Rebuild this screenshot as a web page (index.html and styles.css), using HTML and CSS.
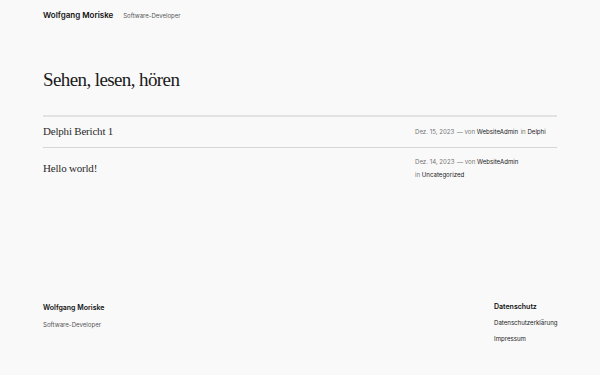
FILE: index.html
```html
<!DOCTYPE html>
<html lang="de">
<head>
<meta charset="utf-8">
<title>Wolfgang Moriske</title>
<link rel="stylesheet" href="styles.css">
</head>
<body>
<div class="page">
  <header class="site-header">
    <a class="site-title" href="#">Wolfgang Moriske</a>
    <span class="site-tagline">Software-Developer</span>
  </header>
  <main class="main">
    <h1 class="page-title">Sehen, lesen, hören</h1>
    <ul class="post-list">
      <li class="post">
        <h2 class="post-title"><a href="#">Delphi Bericht 1</a></h2>
        <div class="post-meta">
          <span class="meta-item">Dez. 15, 2023</span>
          <span class="meta-item">— von <a href="#">WebsiteAdmin</a></span>
          <span class="meta-item">in <a href="#">Delphi</a></span>
        </div>
      </li>
      <li class="post">
        <h2 class="post-title"><a href="#">Hello world!</a></h2>
        <div class="post-meta">
          <span class="meta-item">Dez. 14, 2023</span>
          <span class="meta-item">— von <a href="#">WebsiteAdmin</a></span>
          <span class="meta-item">in <a href="#">Uncategorized</a></span>
        </div>
      </li>
    </ul>
  </main>
  <footer class="site-footer">
    <div class="footer-brand">
      <a class="footer-title" href="#">Wolfgang Moriske</a>
      <span class="footer-tagline">Software-Developer</span>
    </div>
    <nav class="footer-nav">
      <span class="footer-nav-title">Datenschutz</span>
      <a href="#">Datenschutzerklärung</a>
      <a href="#">Impressum</a>
    </nav>
  </footer>
</div>
</body>
</html>
```

FILE: styles.css
```css
* { box-sizing: border-box; }
html, body { margin: 0; padding: 0; }
body {
  background: #f9f9f9;
  color: #111111;
  font-family: Inter, "Noto Sans", sans-serif;
  width: 600px;
  height: 375px;
  overflow: hidden;
}
a { color: inherit; text-decoration: none; }
.page {
  padding: 0 43px;
  display: flex;
  flex-direction: column;
  height: 375px;
}
.site-header {
  display: flex;
  align-items: baseline;
  gap: 10px;
  padding-top: 10px;
  height: 20px;
}
.site-title {
  font-size: 8px;
  font-weight: 600;
  line-height: 10px;
}
.site-tagline {
  font-size: 6px;
  color: #555;
}
.main {
  padding-top: 48px;
}
.page-title {
  font-family: "Liberation Serif", serif;
  font-weight: 400;
  font-size: 19px;
  letter-spacing: -0.6px;
  line-height: 24px;
  margin: 0 0 23px;
  color: #1a1a1a;
}
.post-list {
  list-style: none;
  margin: 0;
  padding: 0;
}
.post {
  display: grid;
  grid-template-columns: 1fr 142px;
  align-items: center;
  border-top: 1px solid #d6d6d6;
  padding: 7px 0 9px;
}
.post:first-child {
  border-top: 2px solid #e2e2e2;
  padding-top: 8px;
}
.post-title {
  font-family: "Liberation Serif", serif;
  font-weight: 400;
  font-size: 11px;
  letter-spacing: -0.2px;
  line-height: 13px;
  margin: 0;
  color: #2a2a2a;
}
.post-meta {
  display: flex;
  flex-wrap: wrap;
  column-gap: 2.5px;
  font-size: 6.1px;
  line-height: 13px;
  color: #767676;
}
.post-meta a { color: #222; }
.site-footer {
  margin-top: auto;
  display: flex;
  justify-content: space-between;
  padding-bottom: 31px;
}
.footer-brand, .footer-nav {
  display: flex;
  flex-direction: column;
}
.footer-title {
  font-size: 7px;
  font-weight: 600;
  line-height: 10px;
  margin-top: 1px;
  margin-bottom: 8px;
}
.footer-tagline {
  font-size: 6.1px;
  color: #555;
}
.footer-nav {
  width: 63px;
  gap: 6px;
}
.footer-nav-title {
  font-size: 7px;
  font-weight: 600;
  line-height: 10px;
}
.footer-nav a {
  font-size: 6.1px;
  line-height: 10px;
  color: #222;
}
```
